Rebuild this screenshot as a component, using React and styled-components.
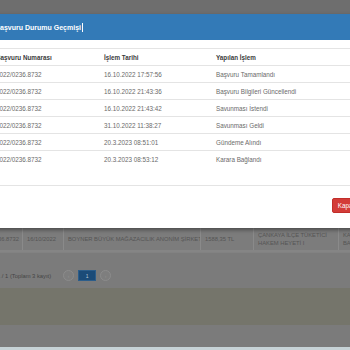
import React from "react";
import styled, { createGlobalStyle } from "styled-components";

const GlobalStyle = createGlobalStyle`
  html, body { margin: 0; padding: 0; }
  body {
    width: 350px;
    height: 350px;
    overflow: hidden;
    background: #7b7b7b;
    font-family: "Liberation Sans", Arial, sans-serif;
  }
`;

const Page = styled.div`
  position: relative;
  width: 350px;
  height: 350px;
  display: flex;
  flex-direction: column;
  background: #7b7b7b;
  overflow: hidden;
`;

const TopBar = styled.div`
  height: 14px;
  background: #6e6e6e;
  flex: none;
`;

const Hidden = styled.div`
  height: 214px;
  flex: none;
  background: #7b7b7b;
`;

const BgRow = styled.div`
  height: 22px;
  flex: none;
  display: grid;
  grid-template-columns: 22px 41px 137px 53px 85px 1fr;
  background: #7c7c7c;
  border-bottom: 2px solid #858585;
`;

const BgCell = styled.div`
  display: flex;
  align-items: center;
  justify-content: ${(p) => (p.$end ? "flex-end" : "flex-start")};
  padding: 0 ${(p) => (p.$end ? "3px" : "4px")};
  border-left: ${(p) => (p.$first ? "none" : "1px solid #8a8a8a")};
  overflow: hidden;
  white-space: nowrap;
  font-size: 5.8px;
  line-height: 8px;
  color: #555555;
  text-transform: uppercase;
`;

const Pager = styled.div`
  height: 36px;
  flex: none;
  display: flex;
  align-items: center;
  padding: 10px 0 0 0;
  box-sizing: border-box;
  gap: 12px;
  background: #7b7b7b;
  border-top: 1px solid #828282;
`;

const PagerText = styled.span`
  margin-left: -3px;
  font-size: 5.8px;
  color: #454545;
  white-space: nowrap;
`;

const PagerButtons = styled.div`
  display: flex;
  align-items: center;
  gap: 4px;
`;

const CircleBtn = styled.span`
  width: 9px;
  height: 9px;
  border-radius: 50%;
  border: 1px solid #8c8c8c;
  background: #7e7e7e;
  color: #909090;
  font-size: 5px;
  display: flex;
  align-items: center;
  justify-content: center;
`;

const PageBtn = styled.span`
  width: 16px;
  height: 9px;
  background: #1b4b78;
  border: 1px solid #2c5d8a;
  color: #b8c6d4;
  font-size: 5px;
  display: flex;
  align-items: center;
  justify-content: center;
`;

const Band = styled.div`
  height: ${(p) => p.$h}px;
  flex: none;
  background: ${(p) => p.$bg};
`;

const Modal = styled.div`
  position: absolute;
  top: 14px;
  left: -20px;
  width: 390px;
  background: #ffffff;
  box-shadow: 0 2px 4px rgba(0, 0, 0, 0.4);
`;

const ModalHeader = styled.div`
  height: 26px;
  background: #337ab7;
  display: flex;
  align-items: center;
  padding-left: 15px;
`;

const Title = styled.h4`
  margin: 0;
  color: #ffffff;
  font-size: 7px;
  font-weight: bold;
  display: flex;
  align-items: center;
`;

const Caret = styled.span`
  display: inline-block;
  width: 1px;
  height: 9px;
  background: #ffffff;
  margin-left: 1px;
`;

const ModalBody = styled.div`
  padding: 8px 16px 18px 16px;
`;

const Table = styled.div`
  display: flex;
  flex-direction: column;
`;

const Row = styled.div`
  display: grid;
  grid-template-columns: 108px 112px 1fr;
  height: 17px;
  align-items: center;
  box-sizing: border-box;
  border-top: 1px solid #e4e4e4;
  font-size: 6.3px;
  color: ${(p) => (p.$head ? "#3a3a3a" : "#6a6a6a")};
  font-weight: ${(p) => (p.$head ? "bold" : "normal")};
  white-space: nowrap;
`;

const ModalFooter = styled.div`
  border-top: 1px solid #e4e4e4;
  padding: 12px 10px 15px 0;
  display: flex;
  justify-content: flex-end;
`;

const CloseBtn = styled.button`
  height: 15px;
  width: 28px;
  padding: 0;
  border: 1px solid #c12e2a;
  border-radius: 2px;
  background: #d33c38;
  color: #ffffff;
  font-family: "Liberation Sans", Arial, sans-serif;
  font-size: 6.3px;
  display: flex;
  align-items: center;
  justify-content: center;
`;

const rows = [
  ["2022/0236.8732", "16.10.2022 17:57:56", "Başvuru Tamamlandı"],
  ["2022/0236.8732", "16.10.2022 21:43:36", "Başvuru Bilgileri Güncellendi"],
  ["2022/0236.8732", "16.10.2022 21:43:42", "Savunması İstendi"],
  ["2022/0236.8732", "31.10.2022 11:38:27", "Savunması Geldi"],
  ["2022/0236.8732", "20.3.2023 08:51:01", "Gündeme Alındı"],
  ["2022/0236.8732", "20.3.2023 08:53:12", "Karara Bağlandı"],
];

export default function App() {
  return (
    <>
      <GlobalStyle />
      <Page>
        <TopBar />
        <Hidden />
        <BgRow>
          <BgCell $first $end>2022/0236.8732</BgCell>
          <BgCell>16/10/2022</BgCell>
          <BgCell>BOYNER BÜYÜK MAĞAZACILIK ANONİM ŞİRKETİ</BgCell>
          <BgCell>1588,35 TL</BgCell>
          <BgCell>
            ÇANKAYA İLÇE TÜKETİCİ
            <br />
            HAKEM HEYETİ I
          </BgCell>
          <BgCell>
            KARARA
            <br />
            BAĞLANDI
          </BgCell>
        </BgRow>
        <Pager>
          <PagerText>1 / 1 (Toplam 3 kayıt)</PagerText>
          <PagerButtons>
            <CircleBtn>‹</CircleBtn>
            <PageBtn>1</PageBtn>
            <CircleBtn>›</CircleBtn>
          </PagerButtons>
        </Pager>
        <Band $h={37} $bg="#75756b" />
        <Band $h={22} $bg="#7b7b7b" />
        <Band $h={3} $bg="#c6d2d6" />

        <Modal>
          <ModalHeader>
            <Title>
              Başvuru Durumu Geçmişi
              <Caret />
            </Title>
          </ModalHeader>
          <ModalBody>
            <Table>
              <Row $head>
                <span>Başvuru Numarası</span>
                <span>İşlem Tarihi</span>
                <span>Yapılan İşlem</span>
              </Row>
              {rows.map((r, i) => (
                <Row key={i}>
                  <span>{r[0]}</span>
                  <span>{r[1]}</span>
                  <span>{r[2]}</span>
                </Row>
              ))}
            </Table>
          </ModalBody>
          <ModalFooter>
            <CloseBtn>Kapat</CloseBtn>
          </ModalFooter>
        </Modal>
      </Page>
    </>
  );
}
